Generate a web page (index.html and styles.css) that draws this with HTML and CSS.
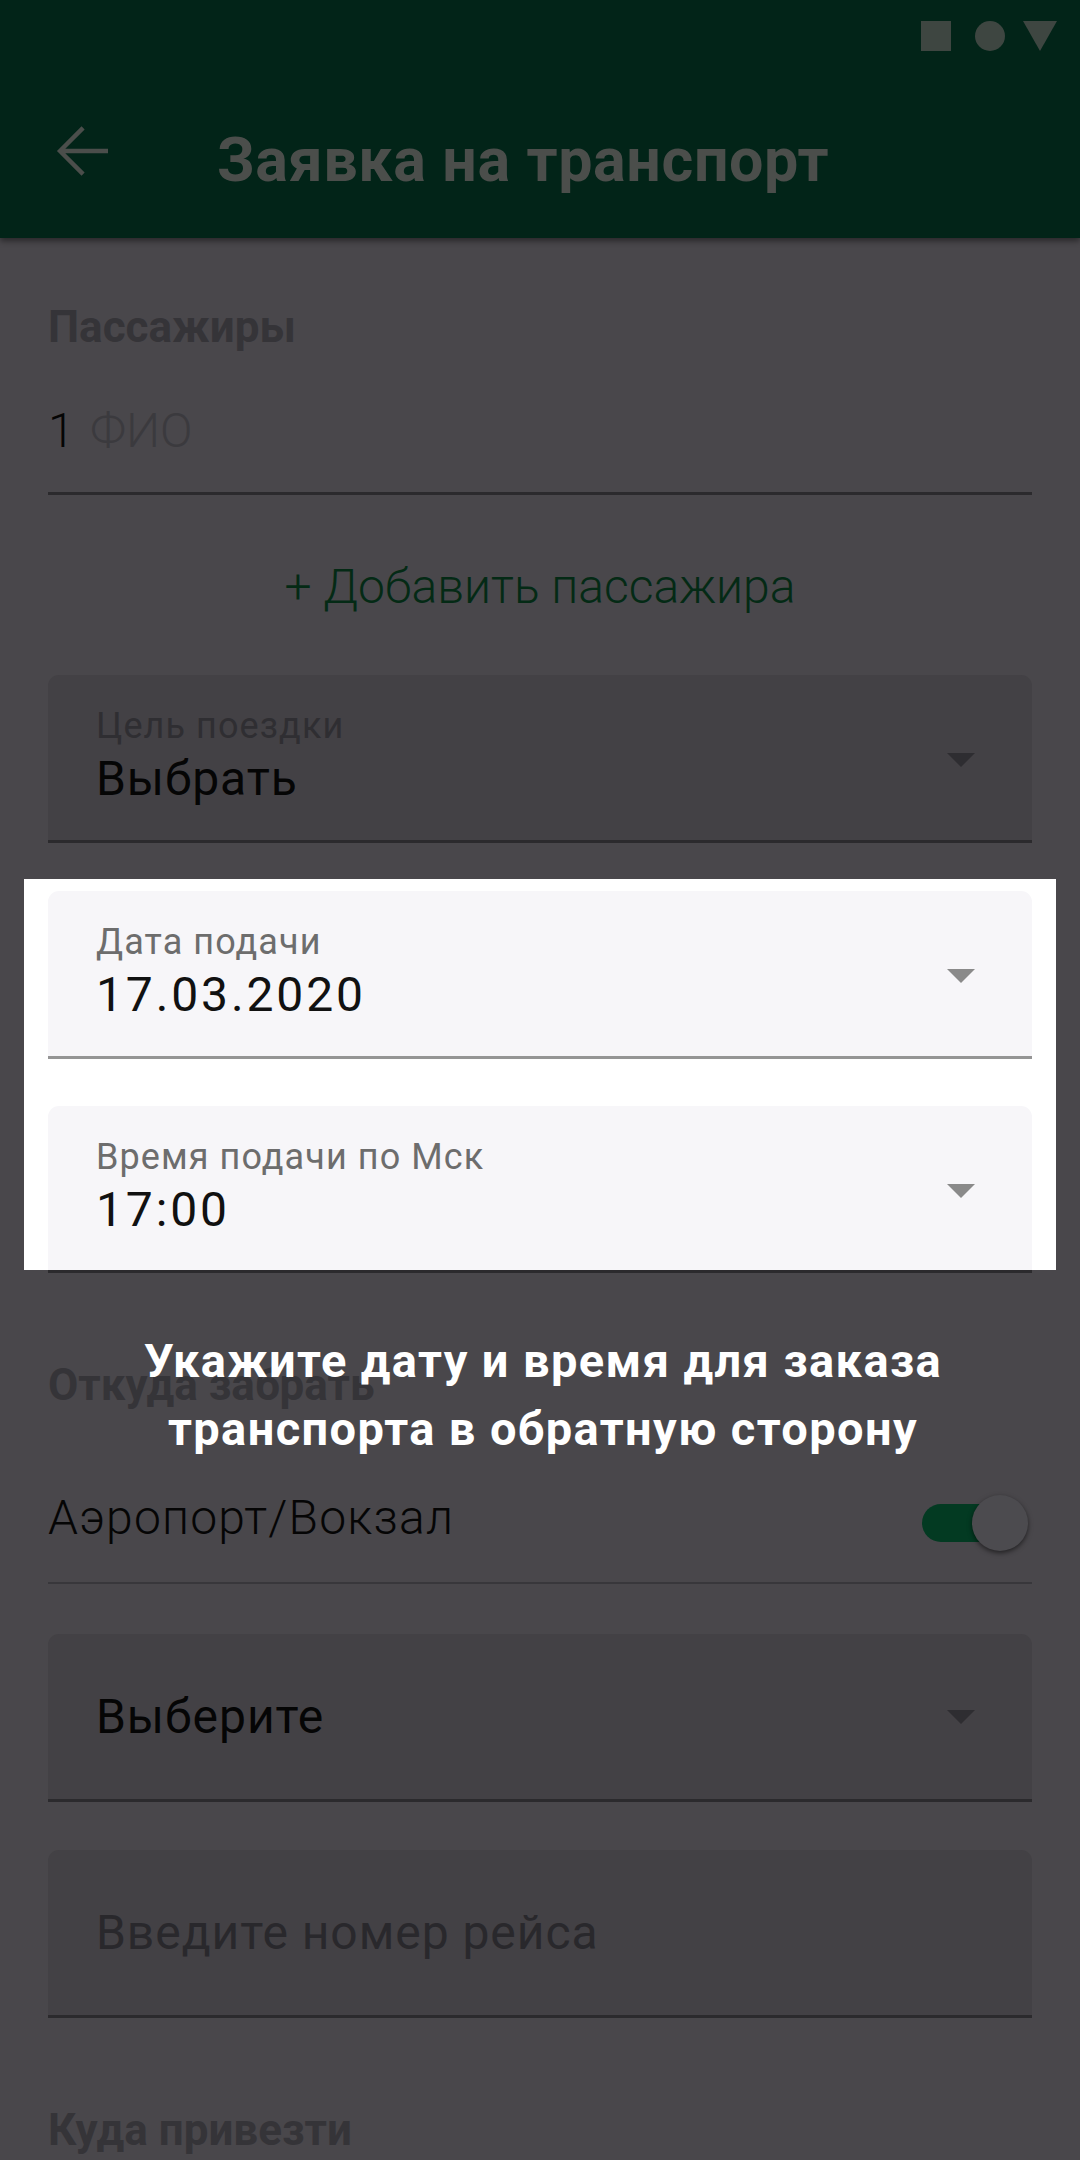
FILE: index.html
```html
<!DOCTYPE html>
<html lang="ru">
<head>
<meta charset="utf-8">
<title>Заявка на транспорт</title>
<link rel="stylesheet" href="styles.css">
</head>
<body>
<div class="screen">
  <header class="appbar">
    <div class="statusbar">
      <span class="sb-square"></span>
      <span class="sb-circle"></span>
      <svg class="sb-triangle" viewBox="0 0 34 30" width="34" height="30"><polygon points="0,0 34,0 17,30"/></svg>
    </div>
    <div class="toolbar">
      <svg class="back" viewBox="0 0 24 24" width="72" height="72"><path d="M20 12H4.6M11.7 4.3L4 12l7.7 7.7"/></svg>
      <h1 class="title">Заявка на транспорт</h1>
    </div>
  </header>

  <main class="form">
    <h2 class="section-title section-title-first">Пассажиры</h2>
    <div class="passenger"><span class="num">1</span> <span class="placeholder">ФИО</span></div>
    <div class="add-link">+ Добавить пассажира</div>

    <div class="field field-first">
      <div class="field-body">
        <div class="field-label">Цель поездки</div>
        <div class="field-value">Выбрать</div>
      </div>
      <svg class="dd" viewBox="0 0 28 14" width="28" height="14"><polygon points="0,0 28,0 14,14"/></svg>
    </div>

    <div class="spotlight">
      <div class="field field-light field-in-spot">
        <div class="field-body">
          <div class="field-label">Дата подачи</div>
          <div class="field-value field-num">17.03.2020</div>
        </div>
        <svg class="dd" viewBox="0 0 28 14" width="28" height="14"><polygon points="0,0 28,0 14,14"/></svg>
      </div>
      <div class="field field-light field-open">
        <div class="field-body">
          <div class="field-label">Время подачи по Мск</div>
          <div class="field-value field-num">17:00</div>
        </div>
        <svg class="dd" viewBox="0 0 28 14" width="28" height="14"><polygon points="0,0 28,0 14,14"/></svg>
      </div>
    </div>
    <div class="field-line"></div>

    <h2 class="section-title">Откуда забрать</h2>
    <div class="switch-row">
      <span class="switch-label">Аэропорт/Вокзал</span>
      <span class="switch"><span class="track"></span><span class="thumb"></span></span>
    </div>

    <div class="field field-plain field-after-row">
      <div class="field-body"><div class="field-value">Выберите</div></div>
      <svg class="dd dd-plain" viewBox="0 0 28 14" width="28" height="14"><polygon points="0,0 28,0 14,14"/></svg>
    </div>
    <div class="field field-plain">
      <div class="field-body"><div class="field-value field-placeholder">Введите номер рейса</div></div>
    </div>

    <h2 class="section-title">Куда привезти</h2>
  </main>

  <div class="tip">Укажите дату и время для заказа<br>транспорта в обратную сторону</div>
</div>
</body>
</html>
```
FILE: styles.css
```css
* { box-sizing: border-box; }
html, body { margin: 0; padding: 0; }
body {
  width: 1080px;
  height: 2160px;
  overflow: hidden;
  background: #49474b;
  font-family: Roboto, "Noto Sans", "DejaVu Sans", sans-serif;
  color: #050505;
}
.screen {
  position: relative;
  width: 1080px;
  height: 2160px;
  overflow: hidden;
  background: #49474b;
}

/* App bar */
.appbar {
  position: relative;
  z-index: 2;
  height: 238px;
  background: #022418;
  box-shadow: 0 3px 6px rgba(0, 0, 0, 0.45);
}
.statusbar {
  height: 72px;
  display: flex;
  align-items: center;
  justify-content: flex-end;
  padding-right: 23px;
}
.sb-square {
  width: 30px;
  height: 30px;
  background: #3e4641;
}
.sb-circle {
  width: 30px;
  height: 30px;
  border-radius: 50%;
  background: #3e4641;
  margin-left: 24px;
}
.sb-triangle {
  margin-left: 18px;
  fill: #3e4641;
}
.toolbar {
  height: 166px;
  display: flex;
  align-items: center;
  padding: 10px 0 0 48px;
}
.back {
  flex: none;
  margin-bottom: 18px;
  fill: none;
  stroke: #4b4e4b;
  stroke-width: 1.45;
}
.title {
  margin: 0 0 0 97px;
  font-size: 61px;
  line-height: 60px;
  font-weight: 700;
  letter-spacing: 0.01em;
  color: #4b4e4b;
}

/* Form */
.form {
  padding: 0 48px;
}
.section-title {
  margin: 86px 0 0;
  font-size: 44px;
  line-height: 52px;
  font-weight: 700;
  color: #353438;
}
.section-title-first {
  margin-top: 63px;
}
.passenger {
  margin-top: 50px;
  padding-bottom: 33px;
  border-bottom: 3px solid #2b2a2d;
  font-size: 48px;
  line-height: 56px;
  font-weight: 300;
}
.num { color: #050505; }
.placeholder { color: #3b3a3e; margin-left: 4px; }
.add-link {
  margin-top: 64px;
  text-align: center;
  font-size: 48px;
  line-height: 56px;
  font-weight: 300;
  color: #042a15;
}

/* Filled text fields */
.field {
  display: flex;
  align-items: center;
  margin-top: 48px;
  padding: 29px 57px 33px 48px;
  background: #434145;
  border-radius: 11px 11px 0 0;
  border-bottom: 3px solid #2b2a2d;
}
.field-first { margin-top: 60px; }
.field-body { flex: 1; min-width: 0; }
.field-label {
  font-size: 36px;
  line-height: 44px;
  letter-spacing: 0.03em;
  color: #2f2e32;
}
.field-value {
  margin-top: 3px;
  font-size: 48px;
  line-height: 56px;
  letter-spacing: 0.02em;
  color: #050505;
}
.field-num {
  letter-spacing: 0.06em;
}
.dd {
  flex: none;
  margin-top: 8px;
  fill: #2e2d31;
}
.field-plain {
  padding-top: 55px;
  padding-bottom: 54px;
}
.field-plain .field-value { margin-top: 0; }
.dd-plain { margin-top: 0; }
.field-placeholder { color: #29282c; }
.field-after-row { margin-top: 50px; }

/* Highlighted area */
.spotlight {
  margin: 36px -24px 0;
  padding: 12px 24px 0;
  background: #ffffff;
}
.field-in-spot { margin-top: 0; }
.field-light {
  background: #f7f6f9;
  border-bottom-color: #959595;
}
.field-light .field-label { color: #6d6d6d; }
.field-light .field-value { color: #111111; }
.field-light .dd { fill: #8a8a8a; }
.field-open {
  margin-top: 47px;
  border-bottom: 0;
  padding-bottom: 32px;
}
.field-line {
  height: 3px;
  background: #2b2a2d;
}

/* Switch row */
.switch-row {
  display: flex;
  align-items: center;
  justify-content: space-between;
  padding: 74px 0 31px;
  border-bottom: 2px solid #38373b;
}
.switch-label {
  font-size: 48px;
  line-height: 56px;
  font-weight: 300;
  letter-spacing: 0.025em;
  color: #050505;
}
.switch {
  position: relative;
  width: 106px;
  height: 56px;
  margin: 10px 4px 0 0;
}
.track {
  position: absolute;
  left: 0;
  top: 9px;
  width: 92px;
  height: 38px;
  border-radius: 19px;
  background: #033a22;
}
.thumb {
  position: absolute;
  right: 0;
  top: 0;
  width: 56px;
  height: 56px;
  border-radius: 50%;
  background: #4c4b4f;
  box-shadow: 0 2px 5px rgba(0, 0, 0, 0.55);
}

/* Coach-mark hint text over the dimmed page */
.tip {
  position: absolute;
  z-index: 3;
  top: 1327px;
  left: 0;
  right: 0;
  padding-left: 6px;
  text-align: center;
  font-size: 47px;
  line-height: 68px;
  font-weight: 700;
  letter-spacing: 0.03em;
  color: #ffffff;
}
```
